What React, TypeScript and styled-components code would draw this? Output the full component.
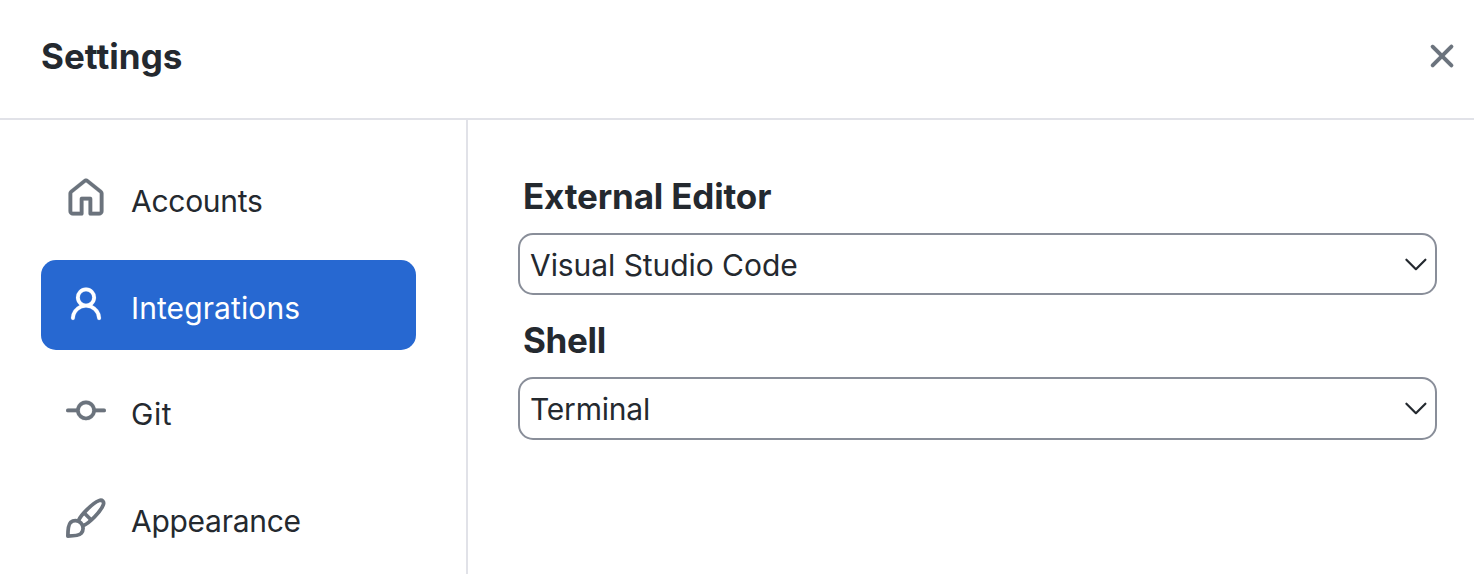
import React from 'react';
import styled, { createGlobalStyle } from 'styled-components';

const GlobalStyle = createGlobalStyle`
  * { box-sizing: border-box; }
  body {
    margin: 0;
    background: #ffffff;
    color: #24292f;
    font-family: Inter, "Liberation Sans", sans-serif;
    overflow: hidden;
  }
`;

const Dialog = styled.div`
  display: flex;
  flex-direction: column;
  width: 1474px;
  height: 574px;
  overflow: hidden;
`;

const Header = styled.header`
  display: flex;
  flex: none;
  align-items: flex-start;
  justify-content: space-between;
  height: 120px;
  padding: 35px 12px 0 41px;
  border-bottom: 2px solid #e1e2e8;
`;

const Title = styled.h1<{ $spacing: number }>`
  margin: 0;
  font-size: 35px;
  font-weight: 650;
  line-height: 42px;
  letter-spacing: ${(p) => p.$spacing}px;
  white-space: nowrap;
`;

const CloseButton = styled.button`
  display: flex;
  padding: 1px 0 0;
  border: 0;
  background: none;
  color: #6b737d;
`;

const Body = styled.div`
  display: flex;
  flex: 1;
  min-height: 0;
`;

const Sidebar = styled.nav`
  display: flex;
  flex: none;
  flex-direction: column;
  gap: 16.7px;
  width: 468px;
  padding: 33px 50px 0 41px;
  border-right: 2px solid #e1e2e8;
`;

const NavItem = styled.a<{ $selected?: boolean }>`
  display: flex;
  flex: none;
  gap: 25px;
  height: 90px;
  padding: 25px 25px 0;
  border-radius: 15px;
  background: ${(p) => (p.$selected ? '#2768d1' : 'transparent')};
  color: ${(p) => (p.$selected ? '#ffffff' : '#6b737d')};
`;

const NavLabel = styled.span<{ $selected?: boolean; $spacing: number }>`
  padding-top: 4px;
  font-size: 30px;
  line-height: 38px;
  letter-spacing: ${(p) => p.$spacing}px;
  white-space: nowrap;
  color: ${(p) => (p.$selected ? '#ffffff' : '#24292f')};
`;

const Content = styled.main`
  flex: 1;
  padding: 55px 37px 0 50px;
`;

const Field = styled.section`
  height: 144px;
`;

const FieldTitle = styled(Title).attrs({ as: 'h2' })`
  padding-left: 5px;
`;

const SelectBox = styled.div<{ $height: number }>`
  display: flex;
  align-items: flex-start;
  justify-content: space-between;
  height: ${(p) => p.$height}px;
  margin-top: 16px;
  padding: 11px 8px 0 10px;
  border: 2px solid #898e99;
  border-radius: 15px;
`;

const SelectValue = styled.span<{ $spacing: number }>`
  font-size: 30px;
  line-height: 38px;
  letter-spacing: ${(p) => p.$spacing}px;
  white-space: nowrap;
`;

const Glyph = styled.svg`
  display: block;
  flex: none;
  width: 40px;
  height: 40px;
  fill: currentColor;
`;

const Chevron = styled.svg`
  display: block;
  width: 23px;
  height: 14px;
  margin-top: 11px;
  fill: none;
  stroke: #24292f;
  stroke-width: 2.2;
  stroke-linecap: round;
  stroke-linejoin: round;
`;

const icons = {
  home: 'M6.906.664a1.749 1.749 0 0 1 2.187 0l5.25 4.2c.415.332.657.835.657 1.367v7.019A1.75 1.75 0 0 1 13.25 15h-3.5a.75.75 0 0 1-.75-.75V9H7v5.25a.75.75 0 0 1-.75.75h-3.5A1.75 1.75 0 0 1 1 13.25V6.23c0-.531.242-1.034.657-1.366l5.25-4.2Zm1.25 1.171a.25.25 0 0 0-.312 0l-5.25 4.2a.25.25 0 0 0-.094.196v7.019c0 .138.112.25.25.25H5.5V8.25a.75.75 0 0 1 .75-.75h3.5a.75.75 0 0 1 .75.75v5.25h2.75a.25.25 0 0 0 .25-.25V6.23a.25.25 0 0 0-.094-.195Z',
  person: 'M10.561 8.073a6 6 0 0 1 3.432 5.142.75.75 0 1 1-1.498.07 4.5 4.5 0 0 0-8.99 0 .75.75 0 0 1-1.498-.07 6 6 0 0 1 3.431-5.142 3.999 3.999 0 1 1 5.123 0ZM10.5 5a2.5 2.5 0 1 0-5 0 2.5 2.5 0 0 0 5 0Z',
  commit: 'M11.93 8.5a4.002 4.002 0 0 1-7.86 0H.75a.75.75 0 0 1 0-1.5h3.32a4.002 4.002 0 0 1 7.86 0h3.32a.75.75 0 0 1 0 1.5Zm-1.43-.75a2.5 2.5 0 1 0-5 0 2.5 2.5 0 0 0 5 0Z',
  close: 'M3.72 3.72a.75.75 0 0 1 1.06 0L8 6.94l3.22-3.22a.75.75 0 1 1 1.06 1.06L9.06 8l3.22 3.22a.75.75 0 1 1-1.06 1.06L8 9.06l-3.22 3.22a.75.75 0 0 1-1.06-1.06L6.94 8 3.72 4.78a.75.75 0 0 1 0-1.06Z',
};

type IconName = keyof typeof icons | 'brush';

function Icon({ name }: { name: IconName }) {
  if (name === 'brush') {
    return (
      <Glyph viewBox="0 0 16 16" aria-hidden="true">
        <g fill="none" stroke="currentColor" strokeWidth="1.5" strokeLinejoin="round">
          <path d="M.75 15.25C.75 13 .9 10.7 1.8 9.8a3.05 3.05 0 0 1 4.3 4.3C5.2 15 3 15.2.75 15.25Z" />
          <path d="M5 9C6 6.6 10.6 2.1 13.2 1.050c1.300-.5 2.200.4 1.700 1.700C13.900 5.400 9.400 10 7 11" />
          <path d="M7.300 6 10 8.700" />
        </g>
      </Glyph>
    );
  }
  return (
    <Glyph viewBox="0 0 16 16" aria-hidden="true">
      <path fillRule="evenodd" stroke="currentColor" strokeWidth="0.06" d={icons[name]} />
    </Glyph>
  );
}

const navItems: { icon: IconName; label: string; spacing: number; selected?: boolean }[] = [
  { icon: 'home', label: 'Accounts', spacing: -0.28 },
  { icon: 'person', label: 'Integrations', spacing: 0.1, selected: true },
  { icon: 'commit', label: 'Git', spacing: 0.5 },
  { icon: 'brush', label: 'Appearance', spacing: -0.28 },
];

const fields = [
  { title: 'External Editor', titleSpacing: -0.17, value: 'Visual Studio Code', valueSpacing: -0.06, height: 62 },
  { title: 'Shell', titleSpacing: -0.35, value: 'Terminal', valueSpacing: -0.2, height: 63 },
];

export default function App() {
  return (
    <>
      <GlobalStyle />
      <Dialog>
        <Header>
          <Title $spacing={0.03}>Settings</Title>
          <CloseButton aria-label="Close">
            <Icon name="close" />
          </CloseButton>
        </Header>
        <Body>
          <Sidebar>
            {navItems.map((item) => (
              <NavItem key={item.label} $selected={item.selected}>
                <Icon name={item.icon} />
                <NavLabel $selected={item.selected} $spacing={item.spacing}>
                  {item.label}
                </NavLabel>
              </NavItem>
            ))}
          </Sidebar>
          <Content>
            {fields.map((field) => (
              <Field key={field.title}>
                <FieldTitle $spacing={field.titleSpacing}>{field.title}</FieldTitle>
                <SelectBox $height={field.height}>
                  <SelectValue $spacing={field.valueSpacing}>{field.value}</SelectValue>
                  <Chevron viewBox="0 0 23 14" aria-hidden="true">
                    <path d="M2.400 2.700 11.900 12.200 21.400 2.700" />
                  </Chevron>
                </SelectBox>
              </Field>
            ))}
          </Content>
        </Body>
      </Dialog>
    </>
  );
}
